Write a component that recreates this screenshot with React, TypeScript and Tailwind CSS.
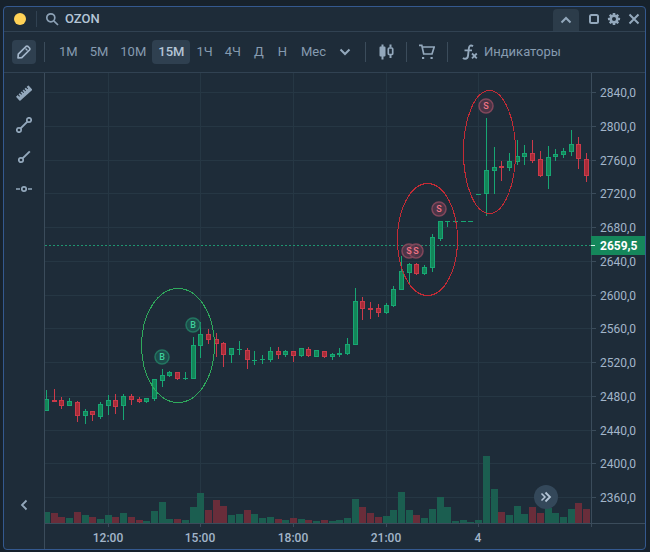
import type { ReactNode } from "react";
import clsx from "clsx";

// [wick top, body top, body bottom, wick bottom, volume, 1 = up / 0 = down]
type Candle = [number, number, number, number, number, 0 | 1];

const CANDLES: Candle[] = [
  [390, 399, 411, 411, 11, 1], [389, 400, 402, 402, 10, 0], [397, 400, 406, 409, 6, 0], [398, 401, 406, 406, 5, 1],
  [401, 402, 416, 422, 11, 0], [409, 411, 416, 424, 8, 1], [411, 411, 415, 421, 6, 0], [402, 404, 417, 419, 4, 1],
  [395, 400, 406, 415, 8, 1], [394, 400, 407, 414, 6, 0], [394, 396, 406, 420, 10, 1], [394, 396, 400, 405, 6, 0],
  [397, 399, 402, 403, 3, 0], [398, 398, 402, 403, 2, 1], [379, 379, 399, 401, 12, 1], [369, 375, 381, 387, 21, 1],
  [371, 372, 376, 377, 4, 1], [372, 372, 379, 380, 4, 0], [372, 378, 379, 380, 3, 1], [337, 345, 379, 379, 16, 1],
  [322, 334, 346, 358, 30, 1], [329, 334, 340, 344, 13, 0], [333, 339, 344, 357, 23, 0], [342, 343, 355, 367, 17, 0],
  [348, 348, 355, 363, 8, 1], [341, 349, 350, 355, 9, 1], [348, 350, 360, 369, 13, 0], [351, 360, 361, 365, 9, 1],
  [355, 359, 360, 364, 5, 1], [347, 351, 360, 362, 6, 1], [347, 351, 355, 359, 4, 0], [350, 351, 355, 357, 3, 1],
  [351, 351, 356, 362, 5, 0], [348, 348, 356, 357, 4, 1], [347, 349, 356, 357, 3, 0], [350, 350, 357, 357, 2, 1],
  [351, 351, 357, 358, 3, 0], [353, 354, 357, 360, 2, 1], [348, 353, 355, 357, 3, 1], [338, 344, 354, 355, 5, 1],
  [288, 301, 345, 345, 24, 1], [297, 301, 309, 320, 16, 0], [302, 308, 310, 319, 10, 0], [304, 308, 313, 317, 6, 0],
  [303, 305, 313, 314, 7, 1], [286, 289, 306, 307, 13, 1], [256, 271, 290, 290, 31, 1], [263, 264, 273, 283, 13, 1],
  [263, 264, 274, 275, 8, 0], [265, 267, 274, 275, 5, 1], [234, 237, 268, 272, 14, 1], [221, 221, 239, 241, 26, 1],
  [221, 221, 222, 227, 16, 1], [221, 221, 222, 222, 2, 1], [221, 221, 222, 222, 3, 1], [221, 221, 222, 222, 1, 1],
  [194, 194, 195, 195, 3, 1], [118, 170, 194, 216, 67, 1], [147, 167, 171, 194, 34, 1], [161, 166, 168, 181, 11, 0],
  [153, 161, 168, 171, 8, 1], [140, 156, 162, 165, 17, 1], [145, 153, 157, 165, 9, 1], [140, 153, 161, 163, 16, 0],
  [151, 159, 176, 177, 10, 0], [146, 157, 176, 189, 15, 1], [149, 154, 157, 161, 10, 1], [148, 151, 155, 158, 6, 1],
  [130, 144, 152, 156, 14, 1], [137, 144, 159, 169, 20, 0], [153, 159, 176, 182, 14, 0],
];

const PRICES = [2840, 2800, 2760, 2720, 2680, 2640, 2600, 2560, 2520, 2480, 2440, 2400, 2360];

const TIMES = [
  { label: "12:00", x: 108 },
  { label: "15:00", x: 200 },
  { label: "18:00", x: 293 },
  { label: "21:00", x: 386 },
  { label: "4", x: 478 },
];

const TRADES = [
  { side: "B", x: 162, y: 357 },
  { side: "B", x: 193, y: 325 },
  { side: "S", x: 409, y: 251 },
  { side: "S", x: 416, y: 251 },
  { side: "S", x: 439, y: 209 },
  { side: "S", x: 486, y: 106 },
];

const TIMEFRAMES = ["1М", "5М", "10М", "15М", "1Ч", "4Ч", "Д", "Н", "Мес"];

const candleX = (i: number) => Math.round(46 + i * 7.717);
const priceY = (price: number) => Math.round(92 + ((2840 - price) / 40) * 33.75);

function Chart() {
  return (
    <svg viewBox="45 73 600 476" className="block w-full" role="img" aria-label="OZON, 15М">
      <defs>
        <clipPath id="plot">
          <rect x="45" y="73" width="546" height="450" />
        </clipPath>
      </defs>

      <g shapeRendering="crispEdges">
        {PRICES.map((p) => (
          <g key={p}>
            <rect x="45" y={priceY(p)} width="546" height="1" fill="#263744" />
            <rect x="591" y={priceY(p)} width="5" height="1" fill="#3b4c5b" />
          </g>
        ))}
        {TIMES.map((t) => (
          <g key={t.label}>
            <rect x={t.x} y="73" width="1" height="450" fill="#263744" />
            <rect x={t.x} y="523" width="1" height="4" fill="#3b4c5b" />
          </g>
        ))}

        <g clipPath="url(#plot)">
          {CANDLES.map(([high, top, bottom, low, volume, up], i) => {
            const x = candleX(i);
            const line = up ? "#17a673" : "#cb3a4a";
            return (
              <g key={i}>
                <rect x={x - 3} y={523 - volume} width="7" height={volume} fill={up ? "#1b5e50" : "#692d3a"} />
                <rect x={x} y={high} width="1" height={low - high} fill={line} />
                <rect x={x - 2} y={top} width="5" height={bottom - top} fill={line} />
                {bottom - top > 2 && (
                  <rect x={x - 1} y={top + 1} width="3" height={bottom - top - 2} fill={up ? "#138658" : "#a92c38"} />
                )}
              </g>
            );
          })}
        </g>

        <path d="M45 245.5H591" stroke="#1f9670" strokeDasharray="2 2" />
        <rect x="591" y="73" width="1" height="454" fill="#3b4c5b" />
        <rect x="45" y="523" width="600" height="1" fill="#3b4c5b" />
      </g>

      <g fill="none" shapeRendering="crispEdges">
        <ellipse cx="178" cy="345.5" rx="36.5" ry="57" stroke="#2fa95c" />
        <ellipse cx="427.5" cy="239.5" rx="30" ry="56" stroke="#c42b35" />
        <ellipse cx="489.5" cy="152" rx="26" ry="61.5" stroke="#c42b35" />
      </g>

      {/* Circles go under all the letters, so that close trades stay readable */}
      {TRADES.map((t) => (
        <circle
          key={t.x}
          cx={t.x}
          cy={t.y}
          r="7"
          fill={t.side === "B" ? "#1b5650" : "#56374a"}
          fillOpacity="0.8"
          stroke={t.side === "B" ? "#237560" : "#81465a"}
          strokeWidth="1.5"
        />
      ))}
      <g textAnchor="middle" className="font-[Roboto,sans-serif] text-[9px] font-medium">
        {TRADES.map((t) => (
          <text key={t.x} x={t.x} y={t.y + 3} fill={t.side === "B" ? "#3fd09b" : "#f07486"}>
            {t.side}
          </text>
        ))}
      </g>

      <g fill="#a3b6ca" className="font-[Roboto,sans-serif] text-[12px]">
        {PRICES.map((p) => (
          <text key={p} x="600" y={priceY(p) + 5}>
            {p},0
          </text>
        ))}
        {TIMES.map((t) => (
          <text key={t.label} x={t.x} y="542" textAnchor="middle" className="font-medium">
            {t.label}
          </text>
        ))}
      </g>

      {/* Last price */}
      <rect x="591" y="236" width="54" height="19" fill="#15875b" />
      <path d="M591 245.5h4" stroke="#d7efe5" />
      <text x="600" y="250" fill="#ffffff" className="font-[Roboto,sans-serif] text-[12px] font-bold">
        2659,5
      </text>
    </svg>
  );
}

function IconButton({ label, className, children }: { label: string; className?: string; children: ReactNode }) {
  return (
    <button type="button" aria-label={label} className={clsx("flex shrink-0 items-center justify-center", className)}>
      {children}
    </button>
  );
}

function Separator() {
  return <div className="h-5 w-px shrink-0 bg-[#3b4c5b]" />;
}

function TitleBar() {
  return (
    <header className="flex h-[25px] items-center border-b border-[#314252] pr-1">
      <button type="button" aria-label="Группа" className="ml-2.5 size-3 shrink-0 rounded-full bg-[#ffd257]" />
      <div className="ml-2.5 h-4 w-px bg-[#314252]" />
      <label className="ml-2 flex min-w-0 flex-1 items-center gap-1.5">
        <svg viewBox="0 0 14 14" className="size-3.5 shrink-0" fill="none" stroke="#8ca1b5" strokeWidth="1.7">
          <circle cx="5.8" cy="5.8" r="4" />
          <path d="M8.8 8.8 13 13" />
        </svg>
        <input
          aria-label="Инструмент"
          defaultValue="OZON"
          className="w-full min-w-0 bg-transparent text-[13px] font-medium text-[#b4c5d6] outline-none"
        />
      </label>
      <IconButton label="Свернуть панель" className="mr-2 h-[22px] w-[26px] self-end rounded-t bg-[#2c3c4a]">
        <svg viewBox="0 0 12 8" className="h-2 w-3" fill="none" stroke="#93a8bc" strokeWidth="2">
          <path d="M1.5 6.5 6 2l4.5 4.5" />
        </svg>
      </IconButton>
      <div className="flex items-center gap-1.5">
        <IconButton label="Развернуть" className="size-3.5">
          <svg viewBox="0 0 14 14" className="size-3.5" fill="none" stroke="#93a8bc" strokeWidth="2">
            <rect x="3" y="3" width="8" height="8" rx="1.5" />
          </svg>
        </IconButton>
        <IconButton label="Настройки" className="size-3.5">
          <svg viewBox="0 0 14 14" className="size-3.5">
            <g fill="#93a8bc">
              {[0, 45, 90, 135].map((a) => (
                <rect key={a} x="5.7" y="1" width="2.6" height="12" rx="0.5" transform={`rotate(${a} 7 7)`} />
              ))}
              <circle cx="7" cy="7" r="4.5" />
            </g>
            <circle cx="7" cy="7" r="2" fill="#1e2c39" />
          </svg>
        </IconButton>
        <IconButton label="Закрыть" className="size-3.5">
          <svg viewBox="0 0 14 14" className="size-3.5" fill="none" stroke="#93a8bc" strokeWidth="2">
            <path d="m2.5 2.5 9 9m0-9-9 9" />
          </svg>
        </IconButton>
      </div>
    </header>
  );
}

function Toolbar() {
  return (
    <div className="flex h-[41px] items-center border-b border-[#314252] text-[13px] text-[#869bb0]">
      <IconButton label="Рисование" className="ml-2 size-6 rounded bg-[#2f4050]">
        <svg viewBox="0 0 16 16" className="size-4" fill="none" stroke="#a3b6ca" strokeWidth="1.7" strokeLinejoin="round">
          <path d="M2 14 2.3 10.2 10 2.5Q11 1.6 12 2.5L13.5 4Q14.400 5 13.5 6L5.800 13.700Z" />
          <path d="m9.5 4.500 2 2" strokeWidth="1.2" />
        </svg>
      </IconButton>
      <div className="mx-2">
        <Separator />
      </div>

      <div className="flex items-center">
        {TIMEFRAMES.map((tf, i) => (
          <button
            key={tf}
            type="button"
            aria-pressed={tf === "15М"}
            className={clsx(
              "h-6 rounded",
              i < 6 ? "px-[6px]" : "px-[7px]",
              tf === "15М" && "bg-[#2f4050] font-medium text-[#b4c5d6]",
            )}
          >
            {tf}
          </button>
        ))}
      </div>
      <IconButton label="Другие интервалы" className="ml-1 mr-3 h-6 w-4">
        <svg viewBox="0 0 12 8" className="h-2 w-3" fill="none" stroke="#93a8bc" strokeWidth="2">
          <path d="M1.5 1.5 6 6l4.5-4.5" />
        </svg>
      </IconButton>
      <Separator />
      <IconButton label="Тип графика" className="w-10">
        <svg viewBox="0 0 16 16" className="size-4" fill="#93a8bc">
          <path d="M3.5 0.5h2v2h1a1 1 0 0 1 1 1v8a1 1 0 0 1-1 1h-1v3h-2v-3h-1a1 1 0 0 1-1-1v-8a1 1 0 0 1 1-1h1z" />
          <path d="M11.5 0.5h2v3h-2zM11.5 11h2v3h-2z" />
          <rect x="10.3" y="4" width="4.4" height="6.5" rx="1" fill="none" stroke="#93a8bc" strokeWidth="1.7" />
        </svg>
      </IconButton>
      <Separator />
      <IconButton label="Заявка" className="w-10">
        <svg viewBox="0 0 16 16" className="size-4" fill="none" stroke="#93a8bc" strokeWidth="1.7">
          <path d="M0 1.3h2.8L4.7 10H13L15.2 3H3.3" />
          <path d="M3 14h2.2m6.3 0h2.2" strokeWidth="2.2" />
        </svg>
      </IconButton>
      <Separator />
      <button type="button" className="ml-3.5 flex items-center gap-1.5">
        <svg viewBox="0 0 16 16" className="size-4" fill="none" stroke="#93a8bc" strokeWidth="1.9">
          <path d="M11 2.2C9 .8 7.2 1.6 6.9 4L6 11.8Q5.7 14.7 3.2 14.7 1.9 14.7 1 13.8M2.5 6.4h7.5" />
          <path d="m10 9.5 4.8 4.8m0-4.8L10 14.3" strokeWidth="1.8" />
        </svg>
        Индикаторы
      </button>
    </div>
  );
}

function DrawingTools() {
  return (
    <aside className="flex w-[41px] shrink-0 flex-col items-center border-r border-[#3b4c5b] pb-3 pt-3">
      <div className="flex flex-col gap-4">
        <IconButton label="Линейка" className="size-4">
          <svg viewBox="0 0 16 16" className="size-4">
            <g transform="rotate(-42 8 8)">
              <rect x="-0.5" y="5.3" width="17" height="6" rx="0.8" fill="#93a8bc" />
              <path d="M2.5 5v2.5M5.3 5v2.5M8 5v2.5M10.7 5v2.5M13.5 5v2.5" stroke="#1e2c39" strokeWidth="1" />
            </g>
          </svg>
        </IconButton>
        <IconButton label="Отрезок" className="size-4">
          <svg viewBox="0 0 16 16" className="size-4" fill="none" stroke="#93a8bc" strokeWidth="1.7">
            <circle cx="3" cy="13" r="2.2" />
            <circle cx="13" cy="3" r="2.2" />
            <path d="m4.6 11.4 6.8-6.8" strokeWidth="2" />
          </svg>
        </IconButton>
        <IconButton label="Луч" className="size-4">
          <svg viewBox="0 0 16 16" className="size-4" fill="none" stroke="#93a8bc" strokeWidth="1.7">
            <circle cx="5" cy="11" r="2.2" />
            <path d="m6.6 9.4 7.2-7" strokeWidth="2" />
          </svg>
        </IconButton>
        <IconButton label="Горизонтальная линия" className="size-4">
          <svg viewBox="0 0 16 16" className="size-4" fill="none" stroke="#93a8bc" strokeWidth="1.7">
            <circle cx="8" cy="8" r="2.2" />
            <path d="M0 8h4m8 0h4" />
          </svg>
        </IconButton>
      </div>
      <IconButton label="Скрыть инструменты" className="mb-6 mt-auto size-4">
        <svg viewBox="0 0 8 12" className="h-3 w-2" fill="none" stroke="#93a8bc" strokeWidth="1.8">
          <path d="M6.5 1.5 2 6l4.5 4.5" />
        </svg>
      </IconButton>
    </aside>
  );
}

export default function App() {
  return (
    <div className="min-h-screen bg-[#17222c] pb-px pl-[3px] pr-1 pt-[6px] font-[Roboto,sans-serif]">
      <main className="overflow-hidden rounded border border-[#34598f] bg-[#1e2c39]">
        <TitleBar />
        <Toolbar />
        <div className="flex">
          <DrawingTools />
          <div className="relative min-w-0 flex-1">
            <Chart />
            <button
              type="button"
              aria-label="К последней свече"
              className="absolute bottom-10 right-[87px] flex size-6 items-center justify-center rounded-full bg-[#34485a]"
            >
              <svg viewBox="0 0 12 12" className="size-3" fill="none" stroke="#b4c5d6" strokeWidth="1.8">
                <path d="m5.5 1.5 4.5 4.5-4.5 4.5" />
                <path d="m1.5 2.5 3.5 3.5-3.5 3.5" strokeWidth="1.5" />
              </svg>
            </button>
          </div>
        </div>
      </main>
    </div>
  );
}
